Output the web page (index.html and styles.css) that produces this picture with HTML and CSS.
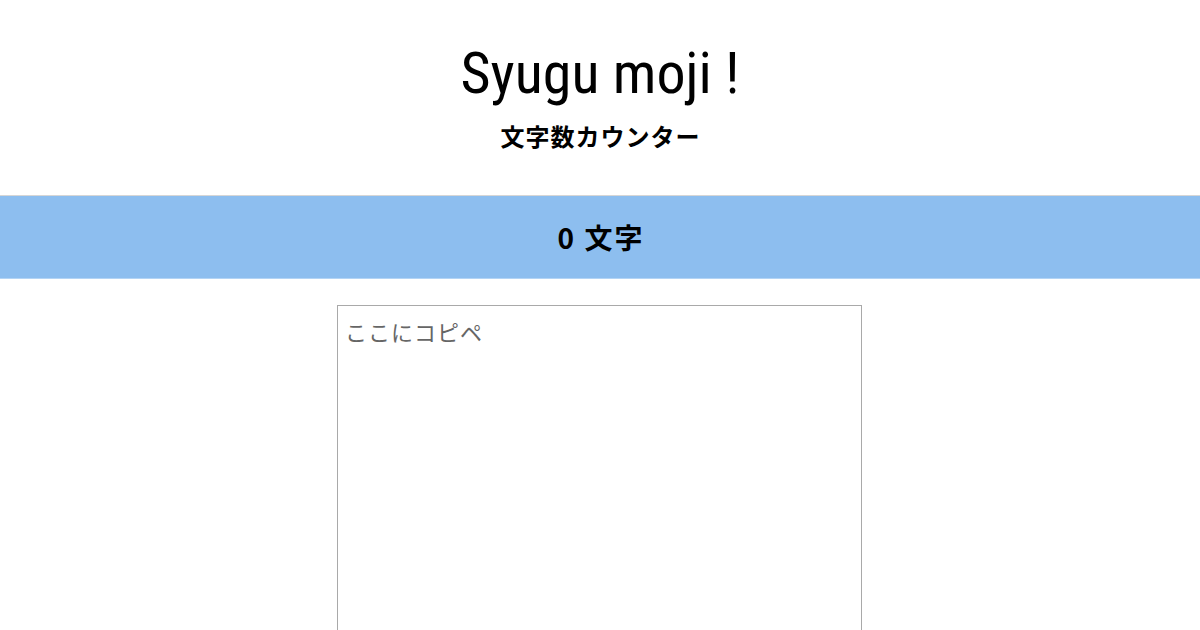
FILE: index.html
```html
<!DOCTYPE html>
<html lang="ja">
<head>
<meta charset="utf-8">
<title>Syugu moji !</title>
<link rel="stylesheet" href="styles.css">
</head>
<body>
<header class="header">
  <h1 class="title">Syugu moji !</h1>
  <p class="subtitle">文字数カウンター</p>
</header>
<section class="counter">
  <p class="count">0 文字</p>
</section>
<main class="main">
  <textarea class="input" placeholder="ここにコピペ"></textarea>
</main>
</body>
</html>
```
FILE: styles.css
```css
html, body {
  margin: 0;
  padding: 0;
  background: #fff;
  overflow: hidden;
}
body {
  font-family: "Noto Sans CJK JP", "Noto Sans", sans-serif;
  color: #000;
}
.header {
  display: flex;
  flex-direction: column;
  align-items: center;
  padding-top: 37px;
  height: 157px;
  box-sizing: border-box;
}
.title {
  margin: 0;
  font-family: "Liberation Sans Narrow", "Roboto Condensed", "Roboto", sans-serif;
  font-weight: 400;
  font-size: 58px;
  line-height: 72px;
  letter-spacing: 0;
}
.subtitle {
  margin: 12px 0 0;
  font-size: 24px;
  font-weight: 700;
  line-height: 30px;
  letter-spacing: 1px;
  text-indent: 1px;
}
.counter {
  margin-top: 38px;
  border-top: 1px solid #d6d6d6;
  border-bottom: 1px solid #b3d4f5;
  background: #8dbeef;
  height: 82px;
  display: flex;
  align-items: center;
  justify-content: center;
}
.count {
  margin: 0;
  font-size: 28px;
  font-weight: 700;
  letter-spacing: 2px;
  text-indent: 2px;
}
.main {
  display: flex;
  justify-content: center;
  padding-top: 26px;
}
.input {
  width: 525px;
  height: 400px;
  box-sizing: border-box;
  border: 1px solid #a9a9a9;
  padding: 10px 7px;
  font-family: "Noto Sans CJK JP", sans-serif;
  font-size: 22px;
  line-height: 30px;
  letter-spacing: 1px;
  margin-left: -1px;
}
.input::placeholder {
  color: #666;
}
```
